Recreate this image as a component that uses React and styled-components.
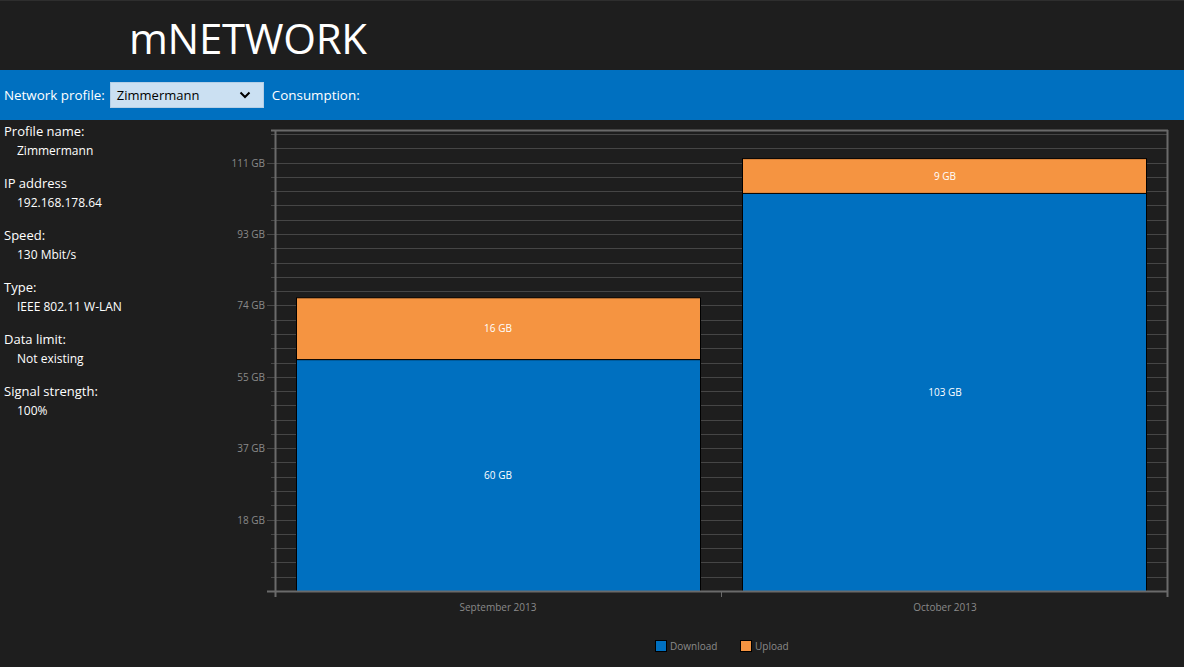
import React from 'react';
import styled, { createGlobalStyle } from 'styled-components';

const GlobalStyle = createGlobalStyle`
  html, body {
    margin: 0;
    padding: 0;
    background: #1e1e1e;
  }
  body {
    font-family: 'Open Sans', 'Noto Sans', sans-serif;
    color: #ffffff;
  }
`;

const profile = [
  { label: 'Profile name:', value: 'Zimmermann' },
  { label: 'IP address', value: '192.168.178.64' },
  { label: 'Speed:', value: '130 Mbit/s' },
  { label: 'Type:', value: 'IEEE 802.11 W-LAN' },
  { label: 'Data limit:', value: 'Not existing' },
  { label: 'Signal strength:', value: '100%' },
];

const months = [
  { name: 'September 2013', download: 60, upload: 16, x: 296, center: 498 },
  { name: 'October 2013', download: 103, upload: 9, x: 742, center: 945 },
];

// chart geometry in page pixels (svg viewBox starts at 220,120)
const LEFT = 275;
const RIGHT = 1168;
const TOP = 130;
const BOTTOM = 591;
const STEP = 14.28;
const PX_PER_GB = 3.865;
const BAR_W = 404;
const yLabels = ['18 GB', '37 GB', '55 GB', '74 GB', '93 GB', '111 GB'];

const App = () => {
  return (
    <>
      <GlobalStyle />
      <Window>
        <Header>
          <Title>mNETWORK</Title>
        </Header>
        <Toolbar>
          <ToolLabel>Network profile:</ToolLabel>
          <Select>
            <span>Zimmermann</span>
            <svg width="12" height="8" viewBox="0 0 12 8">
              <path d="M1.5 1.5 L6 6 L10.5 1.5" fill="none" stroke="#000" strokeWidth="2" />
            </svg>
          </Select>
          <ToolLabel $spaced>Consumption:</ToolLabel>
        </Toolbar>
        <Main>
          <Sidebar>
            {profile.map((p) => (
              <Field key={p.label}>
                <FieldLabel>{p.label}</FieldLabel>
                <FieldValue>{p.value}</FieldValue>
              </Field>
            ))}
          </Sidebar>
          <ChartBox>
            <Chart />
          </ChartBox>
        </Main>
      </Window>
    </>
  );
};

const Chart = () => {
  const lines = [];
  for (let i = 1; i <= 32; i++) {
    const y = Math.round(BOTTOM - i * STEP) + 0.5;
    const major = i % 5 === 0;
    lines.push(
      <g key={i}>
        <line x1={major ? 267 : 271} x2={RIGHT} y1={y} y2={y} stroke="#464646" strokeWidth="1" />
        {major && (
          <text x={265} y={y + 3.5} textAnchor="end" fill="#8a8a8a" fontSize="10">
            {yLabels[i / 5 - 1]}
          </text>
        )}
      </g>
    );
  }

  return (
    <svg width="964" height="547" viewBox="220 120 964 547" fontFamily="'Open Sans', 'Noto Sans', sans-serif">
      {lines}
      <line x1={271} x2={RIGHT} y1={TOP + 0.5} y2={TOP + 0.5} stroke="#6a6a6a" strokeWidth="2" />
      <line x1={LEFT + 0.5} x2={LEFT + 0.5} y1={TOP} y2={597} stroke="#6a6a6a" strokeWidth="2" />
      <line x1={RIGHT - 0.5} x2={RIGHT - 0.5} y1={TOP} y2={597} stroke="#6a6a6a" strokeWidth="2" />

      {months.map((m) => {
        const dl = m.download * PX_PER_GB;
        const ul = m.upload * PX_PER_GB;
        const dlTop = BOTTOM - dl;
        const ulTop = dlTop - ul;
        return (
          <g key={m.name}>
            <rect x={m.x + 0.5} y={dlTop + 0.5} width={BAR_W} height={dl} fill="#0070c0" stroke="#000" strokeWidth="1" />
            <rect x={m.x + 0.5} y={ulTop + 0.5} width={BAR_W} height={ul} fill="#f59441" stroke="#000" strokeWidth="1" />
            <text x={m.center} y={dlTop + dl / 2 + 4} textAnchor="middle" fill="#ffffff" fontSize="10">
              {m.download} GB
            </text>
            <text x={m.center} y={ulTop + ul / 2 + 4} textAnchor="middle" fill="#ffffff" fontSize="10">
              {m.upload} GB
            </text>
            <text x={m.center} y={611} textAnchor="middle" fill="#8a8a8a" fontSize="10">
              {m.name}
            </text>
          </g>
        );
      })}

      <line x1={267} x2={RIGHT} y1={BOTTOM + 0.5} y2={BOTTOM + 0.5} stroke="#6a6a6a" strokeWidth="2" />
      <line x1={721.5} x2={721.5} y1={BOTTOM} y2={597} stroke="#6a6a6a" strokeWidth="1" />

      <rect x={655.5} y={640.5} width={11} height={11} fill="#0070c0" stroke="#000" />
      <text x={670} y={650} fill="#8a8a8a" fontSize="10">Download</text>
      <rect x={740.5} y={640.5} width={11} height={11} fill="#f59441" stroke="#000" />
      <text x={755} y={650} fill="#8a8a8a" fontSize="10">Upload</text>
    </svg>
  );
};

const Window = styled.div`
  width: 1184px;
  height: 667px;
  display: flex;
  flex-direction: column;
  overflow: hidden;
  background: #1e1e1e;
  border-top: 1px solid #2e2e2e;
  box-sizing: border-box;
`;

const Header = styled.header`
  height: 69px;
  display: flex;
  align-items: center;
  padding: 4px 0 0 129px;
  box-sizing: border-box;
`;

const Title = styled.h1`
  margin: 0;
  font-size: 42px;
  font-weight: 400;
  letter-spacing: -0.3px;
  color: #ffffff;
  line-height: 1;
`;

const Toolbar = styled.div`
  height: 50px;
  background: #0070c0;
  display: flex;
  align-items: center;
  padding-left: 4px;
  gap: 5px;
`;

const ToolLabel = styled.span`
  font-size: 13.4px;
  color: #ffffff;
  margin-left: ${(p) => (p.$spaced ? '3px' : '0')};
`;

const Select = styled.div`
  width: 154px;
  height: 26px;
  box-sizing: border-box;
  background: #cbe0f2;
  border: 1px solid #b5cfe6;
  display: flex;
  align-items: center;
  justify-content: space-between;
  padding: 0 12px 0 6px;
  color: #000000;
  font-size: 13px;
`;

const Main = styled.div`
  flex: 1;
  display: flex;
`;

const Sidebar = styled.aside`
  width: 220px;
  padding: 3px 0 0 4px;
  box-sizing: border-box;
  display: flex;
  flex-direction: column;
  gap: 15px;
`;

const Field = styled.div`
  display: flex;
  flex-direction: column;
  gap: 2px;
`;

const FieldLabel = styled.span`
  font-size: 13px;
  line-height: 17px;
  color: #ffffff;
`;

const FieldValue = styled.span`
  font-size: 12px;
  line-height: 18px;
  padding-left: 13px;
  color: #ffffff;
`;

const ChartBox = styled.div`
  flex: 1;
  display: flex;
`;

export default App;
